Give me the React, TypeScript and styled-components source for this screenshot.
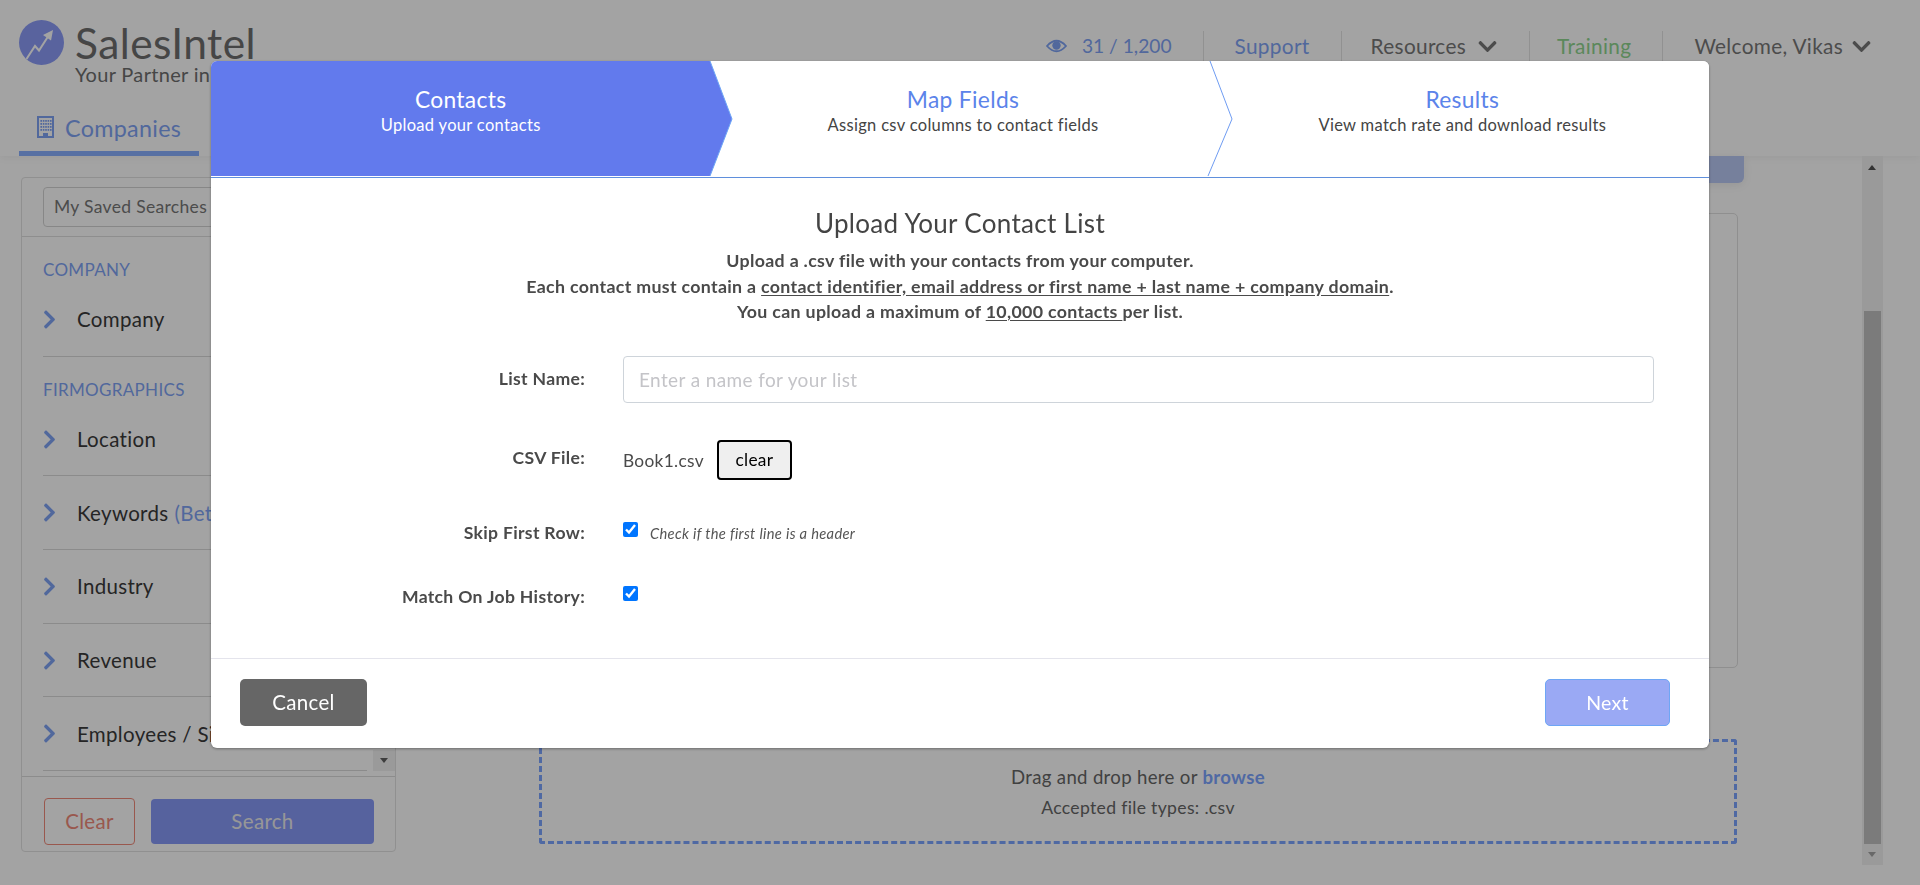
import React from "react";
import styled, { createGlobalStyle } from "styled-components";
import { FaChevronDown, FaChevronRight } from "react-icons/fa";

const Global = createGlobalStyle`
  html, body { margin: 0; height: 100%; overflow: hidden; background: #fff; }
  body { font-family: Lato, "Open Sans", sans-serif; color: #3c3c3c; letter-spacing: .02em; }
  * { box-sizing: border-box; }
`;

const Page = styled.div`
  width: 1920px; height: 885px; display: flex; flex-direction: column; overflow: hidden;
`;
const Header = styled.header`
  height: 156px; flex: none; display: flex; justify-content: space-between; box-shadow: 0 2px 8px rgba(0,0,0,.05);
`;
const Brand = styled.div`
  display: flex; flex-direction: column; padding: 20px 0 0 19px;
`;
const LogoRow = styled.div`display: flex; gap: 11px;`;
const LogoText = styled.div`display: flex; flex-direction: column; line-height: 1; padding-top: 2px; height: 65px;`;
const LogoName = styled.span`font-size: 42.5px; line-height: 42px; color: #6e6e6e; letter-spacing: .01em;`;
const LogoTag = styled.span`font-size: 20px; line-height: 20px; color: #6e6e6e; white-space: nowrap;`;
const Tab = styled.div`
  margin-top: 25px; width: 180px; height: 46px; display: flex; gap: 11px; padding: 4px 0 0 18px;
  align-items: flex-start; border-bottom: 5px solid #89b0ff; color: #7fa3f5; font-size: 23.3px; line-height: 28px;
  svg { margin-top: 2px; flex: none; }
`;
const TopNav = styled.nav`
  display: flex; align-items: center; height: 30px; margin-top: 31px; padding-right: 48px; font-size: 20.8px; line-height: 30px;
`;
const NavItem = styled.div<{ $c?: string; $last?: boolean; $pl?: number }>`
  display: flex; align-items: center; gap: ${p => (p.$last ? 8 : 11)}px; height: 30px; padding: 0 31px 0 ${p => p.$pl ?? 31}px; color: ${p => p.$c || "#777"};
  border-right: ${p => (p.$last ? "none" : "1px solid #e3e3e3")};
  ${p => p.$last && "padding-right: 0;"}
  > svg { font-size: 21px; flex: none; }
`;
const Usage = styled(NavItem)`
  gap: 15px; letter-spacing: 0; font-size: 19.2px;
`;
const Main = styled.div`flex: 1; display: flex; position: relative; min-height: 0;`;
const Side = styled.aside`
  margin: 21px 0 0 21px; width: 375px; height: 675px; border: 1px solid #e2e2e2; border-radius: 4px;
  display: flex; flex-direction: column; flex: none;
`;
const SavedWrap = styled.div`padding: 9px 20px 9px 21px; border-bottom: 1px solid #dedede;`;
const Saved = styled.div`
  height: 40px; border: 1px solid #d4d4d4; border-radius: 4px; padding-left: 10px; font-size: 17.5px; line-height: 38px; color: #777; white-space: nowrap;
`;
const Filters = styled.div`flex: 1; position: relative; overflow: hidden; padding: 0 28px 0 21px;`;
const Section = styled.div`
  color: #7fa3f5; font-size: 17px; line-height: 20px; padding-top: 23px; margin-bottom: 3px;
`;
const Row = styled.div`
  height: 73.7px; display: flex; align-items: center; border-bottom: 1px solid #d9d9d9; font-size: 20.5px; color: #3a3a3a; white-space: nowrap;
  svg { color: #7fa3f5; font-size: 21px; margin: 0 17px 0 -4px; flex: none; }
  span { color: #7fa3f5; margin-left: 6px; }
`;
const ScrollDown = styled.div`
  position: absolute; right: 0; bottom: 5px; width: 22px; height: 21px; background: #f1f1f1;
  display: flex; align-items: center; justify-content: center;
  &::after { content: ""; border-left: 4.5px solid transparent; border-right: 4.5px solid transparent; border-top: 5px solid #606060; }
`;
const Actions = styled.div`
  flex: none; height: 75px; border-top: 1px solid #dcdcdc; display: flex; gap: 16px; padding: 21px 21px 0 22px;
`;
const ClearBtn = styled.div`
  width: 91px; height: 47px; border: 1px solid #f08a7a; border-radius: 4px; color: #f08a7a; font-size: 20.5px; text-align: center; line-height: 45px;
`;
const SearchBtn = styled.div`
  width: 223px; height: 45px; margin-top: 1px; background: #8799f8; border-radius: 4px; color: #ededed; font-size: 20.5px; text-align: center; line-height: 45px;
`;
const Content = styled.div`
  position: relative; flex: 1; margin-left: 143px; padding-top: 57px;
`;
const ActionBar = styled.div`
  position: absolute; top: 0; right: 176px; width: 500px; height: 27px; border-radius: 0 0 6px 6px; background: #b9c8f5;
  box-shadow: 0 2px 10px rgba(0,0,0,.08);
`;
const Results = styled.div`
  width: 1197px; height: 455px; margin-left: 2px; border: 1px solid #e0e0e0; border-radius: 5px;
`;
const Drop = styled.div`
  margin-top: 71px; width: 1198px; height: 105px; padding-top: 2px; border: 3px dashed #7ca4ff; border-radius: 3px;
  display: flex; flex-direction: column; align-items: center; justify-content: center;
  line-height: 29.4px; color: #666;
  b { color: #7ca4ff; font-weight: 700; }
`;
const DropLine = styled.div<{ $size: number }>`font-size: ${p => p.$size}px;`;
const Scrollbar = styled.div`
  position: absolute; top: 0; left: 1862px; width: 21px; height: 709px; background: #f1f1f1;
`;
const Thumb = styled.div`
  position: absolute; top: 155px; left: 2px; width: 17px; height: 533px; background: #c1c1c1;
`;
const Arrow = styled.div<{ $down?: boolean }>`
  position: absolute; left: 6px; width: 0; height: 0; border-left: 4.5px solid transparent; border-right: 4.5px solid transparent;
  ${p => (p.$down ? "bottom: 8px; border-top: 5px solid #a3a3a3;" : "top: 9px; border-bottom: 5px solid #505050;")}
`;

const Overlay = styled.div`
  position: fixed; inset: 0; background: rgba(0,0,0,.36); display: flex; justify-content: center; align-items: flex-start; padding-top: 61px;
`;
const Modal = styled.div`
  width: 1498px; background: #fff; border-radius: 6px; box-shadow: 0 1px 3px rgba(0,0,0,.35); overflow: hidden; letter-spacing: .02em;
`;
const Steps = styled.div`
  height: 117px; display: grid; grid-template-columns: repeat(3, 1fr); border-bottom: 1px solid #5f8fdc; padding-bottom: 1px;
`;
const Step = styled.div<{ $active?: boolean }>`
  position: relative; display: flex; flex-direction: column; align-items: center; padding: 24px 0 0 ${p => (p.$active ? 0 : 6)}px;
  background: ${p => (p.$active ? "#627aed" : "#fff")};
`;
const StepTitle = styled.div<{ $active?: boolean }>`
  font-size: 22.8px; line-height: 29px; color: ${p => (p.$active ? "#fff" : "#5b83ea")};
`;
const StepSub = styled.div<{ $active?: boolean }>`
  font-size: 16.5px; line-height: 22px; color: ${p => (p.$active ? "#fff" : "#444")};
`;
const StepArrow = styled.svg`
  position: absolute; top: 0; right: -23px; width: 23px; height: 115px; z-index: 1; overflow: visible;
`;
const Body = styled.div`
  height: 481px; padding-top: 28px; border-bottom: 1px solid #e4e4ec; display: flex; flex-direction: column;
`;
const Title = styled.h2`
  margin: 0; text-align: center; font-size: 26px; line-height: 34px; font-weight: 400; color: #444;
`;
const Intro = styled.p`
  margin: 8px 0 0; text-align: center; font-size: 17.8px; line-height: 25.5px; font-weight: 700; color: #4a4a4a;
  u { text-underline-offset: 2px; }
`;
const Form = styled.div`
  margin-top: 31px; display: grid; grid-template-columns: 374px 1031px; column-gap: 38px;
`;
const Label = styled.div<{ $h: number; $top: number }>`
  text-align: right; font-size: 17.6px; font-weight: 700; color: #4a4a4a; line-height: 20px; height: ${p => p.$h}px; padding-top: ${p => p.$top}px;
`;
const Input = styled.input`
  width: 1031px; height: 47px; border: 1px solid #ced4da; border-radius: 4px; padding: 0 12px 0 15px; font: inherit; font-size: 19px; outline: none;
  letter-spacing: .02em;
  &::placeholder { color: #c4c4c8; }
`;
const Field = styled.div<{ $h: number }>`
  height: ${p => p.$h}px; display: flex; align-items: flex-start; font-size: 17.3px; color: #4a4a4a;
`;
const FileName = styled.span`line-height: 40px; margin: 1px 13px 0 0;`;
const ClearFile = styled.button`
  width: 75px; height: 40px; border: 2px solid #000; border-radius: 4px; background: #efefef; color: #000; font: inherit; font-size: 17.3px; padding: 0; letter-spacing: .02em;
`;
const Check = styled.input`
  width: 15px; height: 15px; margin: 0; accent-color: #0075ff;
`;
const Hint = styled.i`font-size: 14.7px; color: #555; margin-left: 12px; line-height: 22px;`;
const Footer = styled.div`
  height: 89px; display: flex; justify-content: space-between; padding: 20px 39px 0 29px;
`;
const CancelBtn = styled.div`
  width: 127px; height: 47px; border-radius: 5px; background: #666; color: #fff; text-align: center; line-height: 47px; font-size: 20.5px;
`;
const NextBtn = styled.div`
  width: 125px; height: 47px; border-radius: 5px; background: #9aa9f4; border: 1px solid #6ea6f5; color: #fff; text-align: center; line-height: 45px; font-size: 19.5px;
`;

const filters: Array<[string, string?]> = [["Location"], ["Keywords", "(Beta)"], ["Industry"], ["Revenue"], ["Employees / Size"]];

const windowCols = [4.4, 6.8, 9.2, 11.6, 14];
const windowRows = [4, 7, 10, 13];

export default function App() {
  return (
    <Page>
      <Global />
      <Header>
        <Brand>
          <LogoRow>
            <svg width="45" height="45" viewBox="0 0 45 45">
              <circle cx="22.5" cy="22.5" r="22.5" fill="#8b9cf8" />
              <path d="M7.5 39 L16 26 L20 30.5 L30 15" fill="none" stroke="#fff" strokeWidth="2" />
              <path d="M34 10 L24 15 L32 20.5 Z" fill="#fff" />
            </svg>
            <LogoText>
              <LogoName>SalesIntel</LogoName>
              <LogoTag>Your Partner in Sales</LogoTag>
            </LogoText>
          </LogoRow>
          <Tab>
            <svg width="17" height="22" viewBox="0 0 17 22" fill="#7fa3f5">
              <path fillRule="evenodd" d="M0 0H17V22H0Z M2 2V20H6V17H11V20H15V2Z" />
              {windowRows.map(y => windowCols.map(x => <rect key={`${x}-${y}`} x={x - 1} y={y} width="1.6" height="1.8" />))}
            </svg>
            Companies
          </Tab>
        </Brand>
        <TopNav>
          <Usage $c="#7fa3f5">
            <svg width="21" height="14" viewBox="0 0 21 14">
              <path d="M1 7 Q10.5 -3.5 20 7 Q10.5 17.5 1 7Z" fill="none" stroke="#7fa3f5" strokeWidth="1.8" />
              <circle cx="10.5" cy="6.5" r="4.2" fill="#7fa3f5" />
            </svg>
            31 / 1,200
          </Usage>
          <NavItem $c="#7fa3f5">Support</NavItem>
          <NavItem $pl={29}>Resources <FaChevronDown /></NavItem>
          <NavItem $c="#8fd58f" $pl={27}>Training</NavItem>
          <NavItem $last>Welcome, Vikas <FaChevronDown /></NavItem>
        </TopNav>
      </Header>
      <Main>
        <Side>
          <SavedWrap><Saved>My Saved Searches</Saved></SavedWrap>
          <Filters>
            <Section>COMPANY</Section>
            <Row><FaChevronRight />Company</Row>
            <Section>FIRMOGRAPHICS</Section>
            {filters.map(([t, s]) => (
              <Row key={t}><FaChevronRight />{t}{s && <span>{s}</span>}</Row>
            ))}
            <ScrollDown />
          </Filters>
          <Actions>
            <ClearBtn>Clear</ClearBtn>
            <SearchBtn>Search</SearchBtn>
          </Actions>
        </Side>
        <Content>
          <ActionBar />
          <Results />
          <Drop>
            <DropLine $size={18.6}>Drag and drop here or <b>browse</b></DropLine>
            <DropLine $size={17.6}>Accepted file types: .csv</DropLine>
          </Drop>
        </Content>
        <Scrollbar>
          <Arrow />
          <Thumb />
          <Arrow $down />
        </Scrollbar>
      </Main>
      <Overlay>
        <Modal>
          <Steps>
            <Step $active>
              <StepTitle $active>Contacts</StepTitle>
              <StepSub $active>Upload your contacts</StepSub>
              <StepArrow viewBox="0 0 23 115" preserveAspectRatio="none">
                <path d="M0 0 L22 58 L0 115" fill="#627aed" stroke="#6ea6f5" strokeWidth="1" />
              </StepArrow>
            </Step>
            <Step>
              <StepTitle>Map Fields</StepTitle>
              <StepSub>Assign csv columns to contact fields</StepSub>
              <StepArrow viewBox="0 0 23 115" preserveAspectRatio="none">
                <path d="M0 0 L22 58 L-2 115" fill="#fff" stroke="#6f9cf2" strokeWidth="1" />
              </StepArrow>
            </Step>
            <Step>
              <StepTitle>Results</StepTitle>
              <StepSub>View match rate and download results</StepSub>
            </Step>
          </Steps>
          <Body>
            <Title>Upload Your Contact List</Title>
            <Intro>
              Upload a .csv file with your contacts from your computer.<br />
              Each contact must contain a <u>contact identifier, email address or first name + last name + company domain</u>.<br />
              You can upload a maximum of <u>10,000 contacts </u>per list.
            </Intro>
            <Form>
              <Label $h={84} $top={13}>List Name:</Label>
              <Field $h={84}><Input placeholder="Enter a name for your list" /></Field>
              <Label $h={82} $top={8}>CSV File:</Label>
              <Field $h={82}><FileName>Book1.csv</FileName><ClearFile>clear</ClearFile></Field>
              <Label $h={64} $top={1}>Skip First Row:</Label>
              <Field $h={64}><Check type="checkbox" defaultChecked /><Hint>Check if the first line is a header</Hint></Field>
              <Label $h={40} $top={1}>Match On Job History:</Label>
              <Field $h={40}><Check type="checkbox" defaultChecked /></Field>
            </Form>
          </Body>
          <Footer>
            <CancelBtn>Cancel</CancelBtn>
            <NextBtn>Next</NextBtn>
          </Footer>
        </Modal>
      </Overlay>
    </Page>
  );
}
